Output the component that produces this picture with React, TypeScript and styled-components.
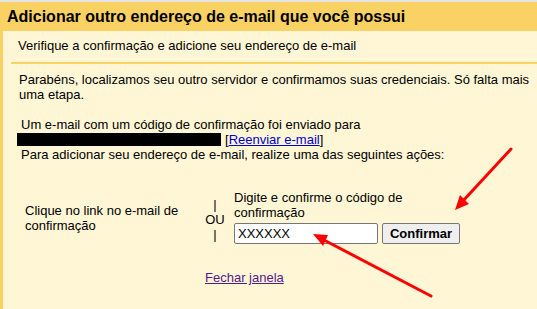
import React from 'react';
import styled, { createGlobalStyle } from 'styled-components';

const GlobalStyle = createGlobalStyle`
  html, body {
    margin: 0;
    padding: 0;
    background: #FAD163;
  }
  body {
    font-family: 'Liberation Sans', Arial, sans-serif;
    color: #000;
  }
`;

const StyledPage = styled.div`
  position: relative;
  min-height: 100vh;
  box-sizing: border-box;
  border-top: 2px solid #E3E3E3;
  background: #FAD163;
  display: flex;
  flex-direction: column;
  overflow: hidden;
`;

const StyledHeader = styled.div`
  height: 29px;
  padding: 0 7px;
  display: flex;
  align-items: center;
  font-size: 16px;
  font-weight: 700;
`;

const StyledPanel = styled.div`
  flex: 1;
  margin-left: 3px;
  background: #FFF6D6;
  display: flex;
  flex-direction: column;
`;

const StyledSubHeader = styled.div`
  margin-left: 8px;
  padding: 7px 0 9px 7px;
  border-bottom: 2px solid #FAD163;
  font-size: 13px;
  line-height: 15px;
`;

const StyledText = styled.p<{ $indent?: number }>`
  margin: 0;
  padding-left: ${p => p.$indent ?? 16}px;
  padding-right: 4px;
  font-size: 13px;
  line-height: 15px;
`;

const StyledIntro = styled(StyledText)`
  margin-top: 8px;
  margin-bottom: 15px;
`;

const StyledMasked = styled.span`
  display: inline-block;
  width: 204px;
  height: 13px;
  background: #000;
  margin-left: -4px;
  margin-right: 4px;
  vertical-align: -2px;
`;

const StyledLink = styled.a<{ $visited?: boolean }>`
  color: ${p => (p.$visited ? '#551A8B' : '#0000CC')};
  text-decoration: underline;
  cursor: pointer;
`;

const StyledActions = styled.div`
  display: flex;
  align-items: center;
  margin-top: 28px;
  font-size: 13px;
  line-height: 15px;
`;

const StyledLeftCell = styled.div`
  width: 176px;
  padding-left: 22px;
  padding-top: 2px;
`;

const StyledOr = styled.div`
  width: 28px;
  display: flex;
  flex-direction: column;
  align-items: center;
  line-height: 15px;
  padding-top: 4px;
`;

const StyledRightCell = styled.div`
  display: flex;
  flex-direction: column;
  padding-left: 5px;
`;

const StyledInputRow = styled.div`
  display: flex;
  gap: 4px;
  margin-top: 3px;
`;

const StyledInput = styled.input`
  width: 144px;
  height: 21px;
  box-sizing: border-box;
  border: 1px solid #767676;
  border-radius: 2px;
  padding: 0 3px;
  font-family: 'Liberation Sans', Arial, sans-serif;
  font-size: 13px;
  background: #fff;
  color: #000;
`;

const StyledButton = styled.button`
  width: 78px;
  height: 21px;
  box-sizing: border-box;
  border: 1px solid #767676;
  border-radius: 2px;
  background: #EFEFEF;
  font-family: 'Liberation Sans', Arial, sans-serif;
  font-size: 13px;
  font-weight: 700;
  padding: 0;
`;

const StyledFooter = styled.div`
  padding-left: 202px;
  margin-top: 26px;
  font-size: 13px;
`;

const StyledArrows = styled.svg`
  position: absolute;
  left: 0;
  top: 0;
  pointer-events: none;
`;

const App: React.FC = () => {
  return (
    <>
      <GlobalStyle />
      <StyledPage>
        <StyledHeader>Adicionar outro endereço de e-mail que você possui</StyledHeader>
        <StyledPanel>
          <StyledSubHeader>Verifique a confirmação e adicione seu endereço de e-mail</StyledSubHeader>
          <StyledIntro>
            Parabéns, localizamos seu outro servidor e confirmamos suas credenciais. Só falta mais uma etapa.
          </StyledIntro>
          <StyledText $indent={18}>
            Um e-mail com um código de confirmação foi enviado para
            <br />
            <StyledMasked />
            [<StyledLink>Reenviar e-mail</StyledLink>]
            <br />
            Para adicionar seu endereço de e-mail, realize uma das seguintes ações:
          </StyledText>
          <StyledActions>
            <StyledLeftCell>Clique no link no e-mail de confirmação</StyledLeftCell>
            <StyledOr>
              <span>|</span>
              <span>OU</span>
              <span>|</span>
            </StyledOr>
            <StyledRightCell>
              <span>Digite e confirme o código de</span>
              <span>confirmação</span>
              <StyledInputRow>
                <StyledInput defaultValue="XXXXXX" />
                <StyledButton>Confirmar</StyledButton>
              </StyledInputRow>
            </StyledRightCell>
          </StyledActions>
          <StyledFooter>
            <StyledLink $visited>Fechar janela</StyledLink>
          </StyledFooter>
        </StyledPanel>
        <StyledArrows width="537" height="309" viewBox="0 0 537 309">
          <line x1="511" y1="147" x2="462" y2="200" stroke="#FF0000" strokeWidth="3" strokeLinecap="round" />
          <polygon points="455,208 469,202 460,193" fill="#FF0000" />
          <line x1="431" y1="294" x2="322" y2="237" stroke="#FF0000" strokeWidth="3" strokeLinecap="round" />
          <polygon points="313,232 328,233 323,244" fill="#FF0000" />
        </StyledArrows>
      </StyledPage>
    </>
  );
};

export default App;
